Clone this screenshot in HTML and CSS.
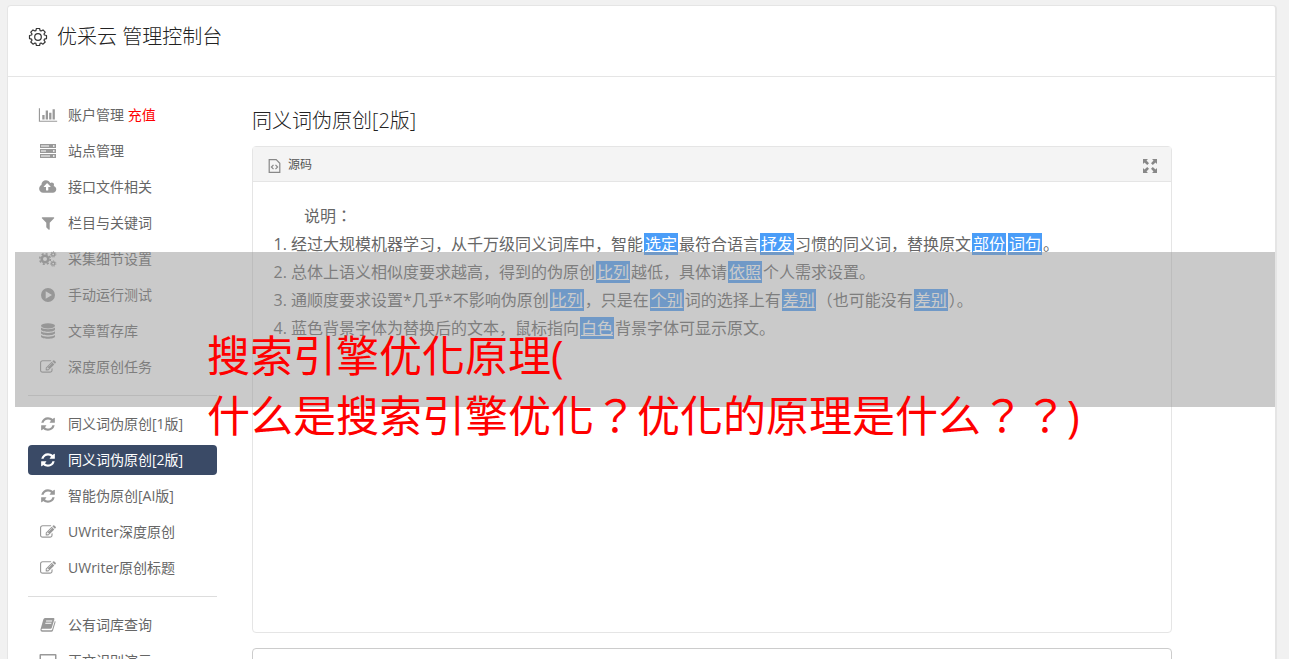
FILE: index.html
```html
<!DOCTYPE html>
<html lang="zh-CN">

<head>
  <meta charset="utf-8">
  <title>优采云 管理控制台</title>
  <link rel="stylesheet" href="styles.css">
</head>

<body>
  <!-- icons -->
  <svg class="sprite" aria-hidden="true">
    <symbol id="gear" viewBox="0 0 20 20">
      <path fill="none" stroke="currentColor" stroke-width="1.2" stroke-linejoin="round" d="M8.4 1.5h3.2l.5 2.1 1 .4 1.9-1.1 2.2 2.2L16 7l.4 1 2.1.5v3.1l-2.1.5-.4 1 1.2 1.9-2.2 2.2-1.9-1.2-1 .4-.5 2.1H8.4l-.5-2.1-1-.4L5 17.200l-2.200-2.200L4 13.100l-.4-1-2.100-.5V8.500L3.600 8 4 7 2.800 5.100 5 2.900 6.900 4l1-.4z" />
      <circle cx="10" cy="10" r="3.300" fill="none" stroke="currentColor" stroke-width="1.200" />
    </symbol>
    <symbol id="chart" viewBox="0 0 2048 1792">
      <path d="M640 896v512h-256v-512h256zm384-512v1024h-256v-1024h256zm1024 1152v128h-2048v-1536h128v1408h1920zm-640-896v768h-256v-768h256zm384-384v1152h-256v-1152h256z" />
    </symbol>
    <symbol id="server" viewBox="0 0 16 16">
      <path fill-rule="evenodd" d="M0 1h16v4H0zM1 2.500v1h8v-1zM13 2.300v1.400h1.500V2.300zM0 6h16v4H0zM1 7.500v1h5v-1zM13 7.300v1.400h1.500V7.300zM0 11h16v4H0zM1 12.500v1h9v-1zM13 12.300v1.400h1.500v-1.400z" />
    </symbol>
    <symbol id="cloud" viewBox="-32 0 1920 1792">
      <path d="M1216 864q0-14-9-23l-352-352q-9-9-23-9t-23 9l-351 351q-10 12-10 24 0 14 9 23t23 9h224v352q0 13 9.500 22.500t22.500 9.500h192q13 0 22.500-9.500t9.500-22.500v-352h224q13 0 22.500-9.500t9.500-22.500zm640 288q0 159-112.500 271.500t-271.500 112.500h-1088q-185 0-316.500-131.500t-131.500-316.500q0-130 70-240t188-165q-2-30-2-43 0-212 150-362t362-150q156 0 285.500 87t188.500 231q71-62 166-62 106 0 181 75t75 181q0 76-41 138 130 31 213.500 135.500t83.500 238.500z" />
    </symbol>
    <symbol id="filter" viewBox="0 0 1792 1792">
      <path d="M1595 295q17 41-14 70l-493 493v742q0 42-39 59-13 5-25 5-27 0-45-19l-256-256q-19-19-19-45v-486l-493-493q-31-29-14-70 17-39 59-39h1280q42 0 59 39z" />
    </symbol>
    <symbol id="cogs" viewBox="0 0 18 16">
      <g fill="none" stroke="currentColor">
        <circle cx="6" cy="8" r="3.300" stroke-width="2.600" />
        <circle cx="6" cy="8" r="5.300" stroke-width="1.600" stroke-dasharray="2.100 2.063" />
        <circle cx="14.200" cy="3.400" r="1.600" stroke-width="1.300" />
        <circle cx="14.200" cy="3.400" r="2.700" stroke-width="1" stroke-dasharray="1.200 1.223" />
        <circle cx="14.200" cy="12.600" r="1.600" stroke-width="1.300" />
        <circle cx="14.200" cy="12.600" r="2.700" stroke-width="1" stroke-dasharray="1.200 1.223" />
      </g>
    </symbol>
    <symbol id="play" viewBox="0 0 16 16">
      <path fill-rule="evenodd" d="M8 1a7 7 0 1 1 0 14A7 7 0 0 1 8 1zM5.700 4.300v7.400L12 8z" />
    </symbol>
    <symbol id="database" viewBox="0 0 16 16">
      <ellipse cx="8" cy="2.800" rx="7" ry="2.600" />
      <path d="M1 4.600c2 2.200 12 2.200 14 0v1.800c0 3-14 3-14 0zM1 8.300c2 2.200 12 2.200 14 0v1.800c0 3-14 3-14 0zM1 12c2 2.200 12 2.200 14 0v1.600c0 3-14 3-14 0z" />
    </symbol>
    <symbol id="edit" viewBox="0 0 1792 1792">
      <path d="M888 1184l116-116-152-152-116 116v56h96v96h56zm440-720q-16-16-33 1l-350 350q-17 17-1 33t33-1l350-350q17-17 1-33zm80 594v190q0 119-84.500 203.500t-203.500 84.500h-832q-119 0-203.500-84.500t-84.500-203.500v-832q0-119 84.500-203.500t203.500-84.500h832q63 0 117 25 15 7 18 23 3 17-9 29l-49 49q-14 14-32 8-23-6-45-6h-832q-66 0-113 47t-47 113v832q0 66 47 113t113 47h832q66 0 113-47t47-113v-126q0-13 9-22l64-64q15-15 35-7t20 29zm-96-738l288 288-672 672h-288v-288zm444 132l-92 92-288-288 92-92q28-28 68-28t68 28l152 152q28 28 28 68t-28 68z" />
    </symbol>
    <symbol id="refresh" viewBox="0 0 1792 1792">
      <path d="M1639 1056q0 5-1 7-64 268-268 434.500t-478 166.500q-146 0-282.500-55t-243.500-157l-129 129q-19 19-45 19t-45-19-19-45v-448q0-26 19-45t45-19h448q26 0 45 19t19 45-19 45l-137 137q71 66 161 102t187 36q134 0 250-65t186-179q11-17 53-117 8-23 30-23h192q13 0 22.500 9.500t9.500 22.500zm25-800v448q0 26-19 45t-45 19h-448q-26 0-45-19t-19-45 19-45l138-138q-148-137-349-137-134 0-250 65t-186 179q-11 17-53 117-8 23-30 23h-199q-13 0-22.500-9.500t-9.500-22.500v-7q65-268 270-434.500t480-166.500q146 0 284 55.500t245 156.500l130-129q19-19 45-19t45 19 19 45z" />
    </symbol>
    <symbol id="book" viewBox="0 0 16 16">
      <path fill-rule="evenodd" d="M5 1h8.700q1 .2.700 1.200l-2.600 8.500q-.3 1-1.300 1H2.400q-1 .1-.9.900.2.700 1.100.7h8.700q.7-.1.900-.8l2.700-8.800q.9.500.6 1.500L13 13.600q-.4 1.200-1.600 1.200H2.200Q.4 14.700.4 12.800L3.300 2.600Q3.800 1.200 5 1zM6.200 3.600l-.3.900h6l.3-.9zM5.500 5.800l-.3.900h6l.3-.9z" />
    </symbol>
    <symbol id="laptop" viewBox="0 0 18 16">
      <path fill-rule="evenodd" d="M1.500 1h15q1 0 1 1v9.500q0 1-1 1h-5l1 2.500h-7l1-2.500h-5q-1 0-1-1V2q0-1 1-1zM2 2.400v7.800h14V2.400z" />
    </symbol>
    <symbol id="code" viewBox="0 0 12 14">
      <path fill="none" stroke="currentColor" stroke-width="1.200" d="M.7.700h7l3.600 3.600v9H.7zM5 5.800 2.900 8 5 10.200M7 5.800 9.100 8 7 10.200" />
    </symbol>
    <symbol id="expand" viewBox="0 0 14 14">
      <path d="M0 0h5L3.500 1.500 6 4.200 4.200 6 1.500 3.500 0 5zM14 0v5l-1.500-1.500L9.800 6 8 4.200l2.500-2.700L9 0zM0 14V9l1.500 1.500L4.200 8 6 9.800l-2.500 2.700L5 14zM14 14H9l1.500-1.500L8 9.800 9.800 8l2.700 2.500L14 9z" />
    </symbol>
  </svg>

  <div class="card">
    <header class="top">
      <svg class="gear"><use href="#gear" /></svg>
      <h1>优采云 管理控制台</h1>
    </header>

    <div class="content">
      <nav class="side">
        <a href="#"><svg><use href="#chart" /></svg><span>账户管理 <b>充值</b></span></a>
        <a href="#"><svg><use href="#server" /></svg>站点管理</a>
        <a href="#"><svg><use href="#cloud" /></svg>接口文件相关</a>
        <a href="#"><svg><use href="#filter" /></svg>栏目与关键词</a>
        <a href="#"><svg><use href="#cogs" /></svg>采集细节设置</a>
        <a href="#"><svg><use href="#play" /></svg>手动运行测试</a>
        <a href="#"><svg><use href="#database" /></svg>文章暂存库</a>
        <a href="#"><svg><use href="#edit" /></svg>深度原创任务</a>
        <hr>
        <a href="#"><svg><use href="#refresh" /></svg>同义词伪原创[1版]</a>
        <a href="#" class="active"><svg><use href="#refresh" /></svg>同义词伪原创[2版]</a>
        <a href="#"><svg><use href="#refresh" /></svg>智能伪原创[AI版]</a>
        <a href="#"><svg><use href="#edit" /></svg>UWriter深度原创</a>
        <a href="#"><svg><use href="#edit" /></svg>UWriter原创标题</a>
        <hr>
        <a href="#"><svg><use href="#book" /></svg>公有词库查询</a>
        <a href="#"><svg><use href="#laptop" /></svg>正文识别演示</a>
      </nav>

      <main>
        <h2>同义词伪原创[2版]</h2>
        <section class="editor">
          <div class="toolbar">
            <button type="button"><svg class="code"><use href="#code" /></svg>源码</button>
            <button type="button" aria-label="全屏"><svg class="expand"><use href="#expand" /></svg></button>
          </div>
          <div class="text">
            <p lang="zh-Hant">说明：</p>
            <ol>
              <li>经过大规模机器学习，从千万级同义词库中，智能<a href="#">选定</a>最符合语言<a href="#">抒发</a>习惯的同义词，替换原文<a href="#">部份</a><a href="#">词句</a>。</li>
              <li>总体上语义相似度要求越高，得到的伪原创<a href="#">比列</a>越低，具体请<a href="#">依照</a>个人需求设置。</li>
              <li>通顺度要求设置*几乎*不影响伪原创<a href="#">比列</a>，只是在<a href="#">个别</a>词的选择上有<a href="#">差别</a>（也可能没有<a href="#">差别</a>）。</li>
              <li>蓝色背景字体为替换后的文本，鼠标指向<a href="#">白色</a>背景字体可显示原文。</li>
            </ol>
          </div>
        </section>
        <textarea aria-label="原文"></textarea>
      </main>
    </div>
  </div>

  <div class="banner" lang="zh-Hant">搜索引擎优化原理(<br>什么是搜索引擎优化？优化的原理是什么？？)</div>
</body>

</html>
```

FILE: styles.css
```css
* {
  box-sizing: border-box;
}

body {
  margin: 0;
  height: 100vh;
  overflow: hidden;
  position: relative;
  background: #f1f1f1;
  color: #666;
  font-family: "Open Sans", "Noto Sans CJK SC", sans-serif;
  font-size: 14px;
}

svg {
  fill: currentColor;
  flex: none;
}

.sprite {
  position: absolute;
  width: 0;
  height: 0;
}

.card {
  margin: 5px 12px 0 7px;
  background: #fff;
  border: 1px solid #e5e5e5;
  border-right-width: 2px;
  border-radius: 4px 4px 0 0;
}

.top {
  display: flex;
  align-items: center;
  gap: 9px;
  height: 71px;
  padding: 0 20px 9px;
  border-bottom: 1px solid #e5e5e5;
  color: #333;
}

.gear {
  width: 20px;
  height: 20px;
}

h1,
h2 {
  margin: 0;
  font-size: 20px;
  font-weight: 300;
  line-height: 30px;
  color: #222;
}

.content {
  display: flex;
  gap: 35px;
  padding: 23px 103px 0 20px;
}

/* left menu */
.side {
  display: flex;
  flex-direction: column;
  gap: 6px;
  width: 189px;
  flex: none;
}

.side a {
  display: flex;
  align-items: center;
  gap: 10px;
  height: 30px;
  padding: 0 10px;
  border-radius: 4px;
  color: #666;
  line-height: 30px;
  text-decoration: none;
  white-space: nowrap;
}

.side svg {
  width: 20px;
  height: 16px;
  color: #999;
}

.side b {
  color: red;
  font-weight: 400;
}

.side .active,
.side .active svg {
  color: #fff;
}

.side .active {
  background: #3a4a66;
}

.side hr {
  width: 100%;
  margin: 7px 0;
  border: 0;
  border-top: 1px solid #ddd;
}

main {
  flex: 1;
  min-width: 0;
  padding-top: 6px;
}

.editor {
  min-height: 487px;
  margin-top: 10px;
  border: 1px solid #e5e5e5;
  border-radius: 4px;
}

.toolbar {
  display: flex;
  justify-content: space-between;
  align-items: center;
  height: 35px;
  padding: 0 14px 0 15px;
  background: #f4f4f4;
  border-bottom: 1px solid #e5e5e5;
}

.toolbar button {
  display: flex;
  align-items: center;
  gap: 7px;
  padding: 0;
  border: 0;
  background: none;
  color: #555;
  font: inherit;
  font-size: 12px;
}

.toolbar svg {
  margin-top: 3px;
  color: #888;
}

.code {
  width: 13px;
  height: 14px;
}

.expand {
  width: 14px;
  height: 14px;
}

.text {
  padding: 20px 19px;
  font-size: 16px;
  line-height: 28px;
}

.text p {
  margin: 0;
  text-indent: 2em;
  font-family: "Open Sans", "Noto Sans CJK TC", sans-serif;
}

.text ol {
  margin: 0;
  padding-left: 19px;
}

.text a {
  margin: 0 1px;
  padding: 0 1px;
  background: #4a9df8;
  color: #fff;
}

textarea {
  display: block;
  width: 100%;
  height: 120px;
  margin-top: 15px;
  border: 1px solid #ccc;
  border-radius: 4px;
  resize: none;
}

/* title strip over the page */
.banner {
  position: absolute;
  top: 252px;
  left: 15px;
  right: 14px;
  height: 155px;
  padding: 74px 0 0 192px;
  background: rgba(150, 150, 150, 0.5);
  color: red;
  font-family: "Open Sans", "Noto Sans CJK TC", sans-serif;
  font-size: 43px;
  line-height: 60px;
  white-space: nowrap;
}
```
